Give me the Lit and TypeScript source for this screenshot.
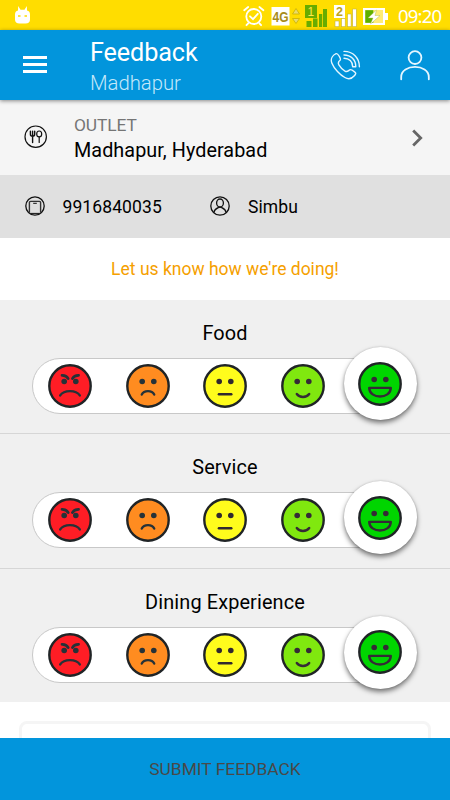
import { LitElement, html, css, svg } from "lit";
import { customElement, property } from "lit/decorators.js";

type Mood = "angry" | "sad" | "neutral" | "happy" | "great";

const MOODS: Mood[] = ["angry", "sad", "neutral", "happy", "great"];

const FILLS: Record<Mood, string> = {
  angry: "#ff1d25",
  sad: "#ff8c20",
  neutral: "#fffc1c",
  happy: "#80e80f",
  great: "#00d500",
};

const INKS: Record<Mood, string> = {
  angry: "#263238",
  sad: "#263238",
  neutral: "#30282f",
  happy: "#352a36",
  great: "#352a36",
};

@customElement("mood-face")
class MoodFace extends LitElement {
  @property() mood: Mood = "neutral";

  static styles = css`
    :host { display: block; width: 44px; height: 44px; }
    .face { display: block; }
  `;

  private mouth() {
    switch (this.mood) {
      case "angry":
        return svg`<path d="M12.2 31.4C16 25.7 28 25.7 31.8 31.4"/>
          <path d="M14 11.3C16.8 11.2 18.8 12 20.2 14.6M30.6 11.3C27.8 11.2 25.8 12 24.4 14.6" stroke-width="2.7"/>`;
      case "sad":
        return svg`<path d="M15.8 30.6C18 26 26 26 28.2 30.6"/>`;
      case "neutral":
        return svg`<path d="M15.9 30.3H28.3"/>`;
      case "happy":
        return svg`<path d="M15.8 30C18.5 33.9 25.5 33.9 28.2 30"/>`;
      default:
        return svg`<path d="M11.2 25.9H32.8C32.4 37.4 11.6 37.4 11.2 25.9Z"/>`;
    }
  }

  render() {
    const ink = INKS[this.mood];
    return html`<svg class="face" width="44" height="44" viewBox="0 0 44 44">
      <circle cx="22" cy="22" r="20.7" fill=${FILLS[this.mood]} stroke="#202426" stroke-width="2.4"/>
      <g fill=${ink}>
        <circle cx="16.2" cy="17.5" r="2.8"/>
        <circle cx="27.8" cy="17.5" r="2.8"/>
      </g>
      <g fill="none" stroke=${ink} stroke-width="2.4" stroke-linecap="round" stroke-linejoin="round">${this.mouth()}</g>
    </svg>`;
  }
}

@customElement("rating-row")
class RatingRow extends LitElement {
  @property() label = "";
  @property() value: Mood = "great";

  static styles = css`
    :host { display: block; height: 134.3px; box-sizing: border-box; background: #f0f0f0; border-bottom: 1px solid #d6d6d6; }
    :host(:last-of-type) { border-bottom: 0; height: 133.4px; }
    .label { margin: 0; padding-top: 22px; font-size: 19.9px; letter-spacing: 0.12px; line-height: 24px; font-weight: 400; text-align: center; color: #000; }
    .track {
      margin: 12px 34px 0 31.5px; height: 56px; box-sizing: border-box; padding: 0 2px 0 15.5px;
      border: 1px solid #c8c8c8; border-radius: 28px; background: #fff;
      display: flex; align-items: center; gap: 33.5px;
    }
    .choice { flex: none; }
    .picked {
      flex: none; width: 73px; height: 73px; margin: -5px 0 0 -14.2px; border-radius: 50%; background: #fff;
      display: flex; align-items: center; justify-content: center;
      box-shadow: 0 3px 5px rgba(0, 0, 0, 0.5), 0 0 2px rgba(0, 0, 0, 0.18);
    }
  `;

  render() {
    return html`
      <h2 class="label">${this.label}</h2>
      <div class="track">
        ${MOODS.map((m) => html`<div class=${m === this.value ? "picked" : "choice"}><mood-face .mood=${m}></mood-face></div>`)}
      </div>`;
  }
}

@customElement("app-root")
class AppRoot extends LitElement {
  static styles = css`
    :host { display: flex; flex-direction: column; height: 800px; overflow: hidden; background: #fff; font-family: Roboto, "Noto Sans", sans-serif; color: #000; }
    svg { display: block; flex: none; }
    .status { flex: none; height: 30px; background: #ffdd00; display: flex; align-items: center; color: #fff; }
    .droid { margin-left: 14px; }
    .tray { margin-left: auto; }
    .clock { font: 18.6px/30px "Noto Sans", sans-serif; letter-spacing: -0.85px; width: 45px; margin: 2px 7px 0 8px; white-space: nowrap; }
    .bar { flex: none; height: 70px; box-sizing: border-box; background: #0295dc; display: flex; align-items: center; color: #fff; box-shadow: 0 1px 4px rgba(0, 0, 0, 0.45); z-index: 1; }
    .menu { margin-left: 23px; }
    .titles { margin-left: 43px; flex: 1; padding-top: 5px; }
    .title { margin: 0; font-size: 25.2px; letter-spacing: -0.1px; line-height: 30px; font-weight: 400; }
    .place { font-size: 20.3px; font-weight: 300; line-height: 30px; color: #c4e8fa; }
    .call { margin-right: 39px; }
    .user { margin-right: 20px; }
    .outlet { flex: none; height: 75px; background: #f5f5f5; display: flex; align-items: center; }
    .dish { margin: -2px 0 0 24px; }
    .where { margin-left: 26px; flex: 1; padding-top: 1px; }
    .caption { font-size: 17.4px; letter-spacing: -0.1px; line-height: 24px; color: #757575; }
    .name { font-size: 19.8px; letter-spacing: 0.06px; line-height: 27px; }
    .chevron { margin-right: 26px; }
    .contact { flex: none; height: 62.5px; background: #e0e0e0; display: flex; align-items: center; font-size: 17.5px; }
    .phone { margin-left: 25px; }
    .number { margin: 2px 0 0 17.5px; width: 147.5px; letter-spacing: 0.1px; }
    .guest { margin: 2px 0 0 18px; letter-spacing: 0.1px; }
    .prompt { flex: none; height: 62.5px; display: flex; align-items: center; justify-content: center; color: #f5a000; font-size: 17.5px; }
    .ratings { flex: none; }
    .comment { flex: none; margin: 19px 19px -60px; height: 60px; box-sizing: border-box; border: 3px solid #f5f5f5; border-radius: 8px; }
    .submit { flex: none; margin-top: auto; height: 62px; border: 0; padding: 0; background: #0295dc; color: #494949; font: 17.4px Roboto, sans-serif; z-index: 1; }
  `;

  render() {
    return html`
      <div class="status">
        <svg class="droid" width="17" height="20" viewBox="0 0 17 20">
          <path d="M4 5.5L4.2 1L6.5 4.8H10.5L12.8 1L13 5.5Q16 6 16 9.5V14.5Q16 18.5 11.5 18.5H5.5Q1 18.5 1 14.5V9.5Q1 6 4 5.5Z" fill="#fff"/>
          <path d="M4 11H6.5M10.5 11H13" stroke="#ffdd00" stroke-width="1.3"/>
        </svg>
        <svg class="tray" width="147" height="28" viewBox="0 0 147 28">
          <g fill="none" stroke="#fff" stroke-width="1.8" stroke-linecap="round">
            <circle cx="10.8" cy="15.5" r="7.5"/>
            <path d="M1.2 9.2L5.2 6M20.4 9.2L16.4 6M5.2 22.3L3.5 24.2M16.4 22.3L18.1 24.2M7 15.3L10 18.2L14.8 12.8"/>
          </g>
          <rect x="28.5" y="6" width="18" height="18.5" fill="#fff"/>
          <text x="29.5" y="20.6" font-family="Liberation Sans, sans-serif" font-weight="700" font-size="14" textLength="16" lengthAdjust="spacingAndGlyphs" fill="#a88c1c">4G</text>
          <path d="M49.5 13L53 7.5L56.5 13ZM49.5 17.5H56.5L53 22.5Z" fill="#eadb68" stroke="#c9b000" stroke-width="0.8"/>
          <g fill="#67ac00">
            <rect x="62" y="4" width="12" height="13"/>
            <rect x="63.5" y="20" width="5" height="6"/><rect x="70" y="17.5" width="4.5" height="8.5"/><rect x="76" y="13" width="3.2" height="13"/><rect x="80" y="8" width="4" height="18"/>
          </g>
          <text x="64.5" y="14.5" font-family="Liberation Sans, sans-serif" font-size="12" fill="#ffe84a">1</text>
          <rect x="91" y="4" width="11" height="13" fill="#fff"/>
          <text x="92.9" y="14.8" font-family="Liberation Sans, sans-serif" font-weight="700" font-size="12.5" fill="#bca31c">2</text>
          <g fill="#fff" stroke="#c5b43a" stroke-width="0.6">
            <rect x="92" y="20" width="4" height="5.7"/><rect x="98.5" y="17.5" width="3.7" height="8.2"/><rect x="104.5" y="13" width="3.6" height="12.7"/><rect x="109.7" y="8" width="3.6" height="17.7"/>
          </g>
          <rect x="121" y="8" width="20" height="15" fill="#ffec77" stroke="#fff" stroke-width="2"/>
          <rect x="142" y="12" width="3" height="7" fill="#fff"/>
          <rect x="122.3" y="9.2" width="8" height="12.6" fill="#5db000"/>
          <path d="M133.5 9L125 17H130L127.5 23L137 14.5H132Z" fill="#fff" stroke="#a9b84c" stroke-width="0.4"/>
        </svg>
        <span class="clock">09:20</span>
      </div>

      <header class="bar">
        <svg class="menu" width="24" height="20" viewBox="0 0 24 20"><path d="M0 2.5H24M0 9.5H24M0 16.5H24" stroke="#fff" stroke-width="2.8"/></svg>
        <div class="titles">
          <h1 class="title">Feedback</h1>
          <div class="place">Madhapur</div>
        </div>
        <svg class="call" width="31" height="31" viewBox="0 0 31 31" fill="none" stroke="#e6f6ff" stroke-width="1.4" stroke-linecap="round" stroke-linejoin="round">
          <path d="M6.1 3.7C7.2 3.2 8.1 4.4 9.1 6C10.2 7.8 11.1 9.1 10.1 10.3C8.1 11.8 7.7 12.8 8.9 14.9C10.5 17.7 12.7 19.9 15.3 21.3C17.5 22.4 18.4 20.5 19.8 19.8C21.3 19.1 23.7 21.2 25 22.2C26.2 23.2 25.8 24.1 24.6 25.5C22.4 28.1 18.9 29.8 14.9 27.5C10.3 24.9 4 18.6 1.9 13.2C.1 8.6 2.8 5.2 6.1 3.7Z"/>
          <path d="M14 1.4C23 1.3 29.4 8 29.4 16.7M14 5C21 5 25.8 10 25.8 16.7H22.7C22.7 11.8 19.2 8.2 14 8.2"/>
        </svg>
        <svg class="user" width="30" height="31" viewBox="0 0 30 31" fill="none" stroke="#e6f6ff" stroke-width="1.8" stroke-linecap="round">
          <circle cx="15" cy="7.6" r="6.4"/><path d="M1.2 29.3V27C1.2 13.6 28.8 13.6 28.8 27V29.3"/>
        </svg>
      </header>

      <section class="outlet">
        <svg class="dish" width="24" height="24" viewBox="0 0 24 24" fill="none" stroke="#111" stroke-width="1.2" stroke-linecap="round">
          <circle cx="11.7" cy="11.7" r="10.7" stroke-width="1.2"/>
          <path d="M6.4 6.3V9.3Q6.4 11.2 8.6 11.2Q10.7 11.2 10.7 9.3V6.3M8.6 6.3V17.5" stroke-width="1.4"/>
          <ellipse cx="15.2" cy="8.9" rx="2.5" ry="2.9"/><path d="M15.2 12V17.5"/>
        </svg>
        <div class="where">
          <div class="caption">OUTLET</div>
          <div class="name">Madhapur, Hyderabad</div>
        </div>
        <svg class="chevron" width="13" height="20" viewBox="0 0 13 20"><path d="M2.2 2.5L9.7 10L2.2 17.5" fill="none" stroke="#666" stroke-width="2.8"/></svg>
      </section>

      <section class="contact">
        <svg class="phone" width="20" height="20" viewBox="0 0 20 20" fill="none" stroke="#111">
          <circle cx="10" cy="10" r="9.2" stroke-width="1.3"/>
          <path d="M4.4 16.7V6.6Q4.4 5.4 5.6 5.4H14.4Q15.6 5.4 15.6 6.6V16.7" stroke="#333" stroke-width="1.4"/><path d="M8.2 7.3H11.8M5.5 17.4H14.5"/>
        </svg>
        <span class="number">9916840035</span>
        <svg class="person" width="20" height="20" viewBox="0 0 20 20" fill="none" stroke="#111" stroke-width="1.3">
          <circle cx="10" cy="10" r="9.2"/><ellipse cx="10" cy="7" rx="3.4" ry="4"/><path d="M3.8 16.7C4.3 13.7 6.5 12.5 8.2 11.7Q10 10.4 11.8 11.7C13.5 12.5 15.7 13.7 16.2 16.7"/>
        </svg>
        <span class="guest">Simbu</span>
      </section>

      <div class="prompt">Let us know how we're doing!</div>

      <main class="ratings">
        <rating-row label="Food"></rating-row>
        <rating-row label="Service"></rating-row>
        <rating-row label="Dining Experience"></rating-row>
      </main>

      <div class="comment"></div>
      <button class="submit">SUBMIT FEEDBACK</button>
    `;
  }
}
